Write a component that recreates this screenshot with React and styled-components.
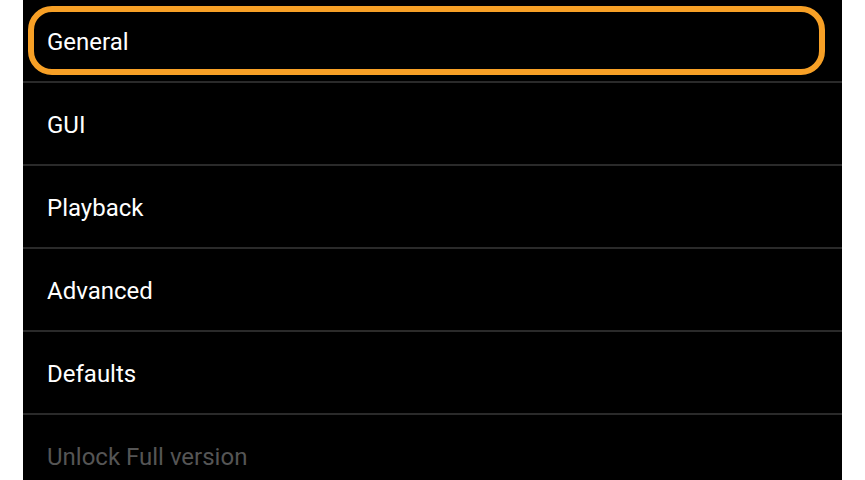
import React from "react";
import styled, { createGlobalStyle } from "styled-components";

const Global = createGlobalStyle`
  html, body { margin: 0; padding: 0; background: #ffffff; }
  body { font-family: Roboto, "Noto Sans", sans-serif; }
`;

const Page = styled.div`
  width: 865px;
  height: 480px;
  overflow: hidden;
  padding-left: 23px;
  box-sizing: border-box;
`;

const Panel = styled.ul`
  width: 819px;
  margin: 0;
  padding: 0;
  list-style: none;
  background: #000000;
  height: 480px;
`;

const Row = styled.li`
  position: relative;
  height: 83px;
  box-sizing: border-box;
  display: flex;
  align-items: center;
  padding-left: 24px;
  padding-top: 3px;
  border-bottom: 2px solid #2a2a2a;
  font-size: 24px;
  color: ${(p) => (p.$disabled ? "#555555" : "#ffffff")};
`;

const Focus = styled.span`
  position: absolute;
  left: 5px;
  right: 17px;
  top: 6px;
  bottom: 6px;
  border: 6px solid #f7a026;
  border-radius: 24px;
  pointer-events: none;
`;

const items = [
  { label: "General", focused: true },
  { label: "GUI" },
  { label: "Playback" },
  { label: "Advanced" },
  { label: "Defaults" },
  { label: "Unlock Full version", disabled: true },
];

export default function App() {
  return (
    <>
      <Global />
      <Page>
        <Panel>
          {items.map((it) => (
            <Row key={it.label} $disabled={it.disabled}>
              {it.focused && <Focus />}
              {it.label}
            </Row>
          ))}
        </Panel>
      </Page>
    </>
  );
}
